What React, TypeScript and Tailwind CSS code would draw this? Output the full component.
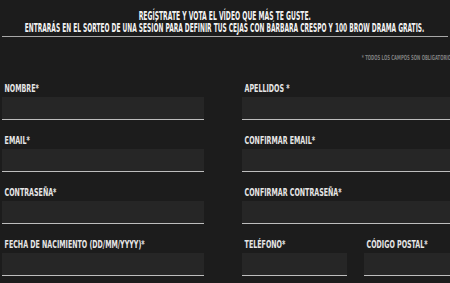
const condensed = {
  fontFamily: '"Liberation Sans Narrow", "DejaVu Sans Condensed", "Liberation Sans", sans-serif',
};

function Field({ label, className = "" }: { label: string; className?: string }) {
  return (
    <div className={`flex flex-col ${className}`}>
      <label className="mb-[2px] block origin-left scale-x-[0.64] whitespace-nowrap pl-[4px] text-[11px] font-bold leading-[12px] text-[#e6e6e6]">
        {label}
      </label>
      <div className="h-[23px] border-b border-[#bdbdbd] bg-[#262626]" />
    </div>
  );
}

export default function App() {
  return (
    <div
      className="h-[283px] w-full overflow-hidden bg-[#1c1c1c]"
      style={condensed}
    >
      <header className="flex flex-col items-center pt-[11px] text-[12px] font-bold leading-[11.5px] text-[#f2f2f2]">
        <p className="shrink-0 origin-center scale-x-[0.56] whitespace-nowrap">
          REGÍSTRATE Y VOTA EL VÍDEO QUE MÁS TE GUSTE.
        </p>
        <p className="shrink-0 origin-center scale-x-[0.545] whitespace-nowrap">
          ENTRARÁS EN EL SORTEO DE UNA SESIÓN PARA DEFINIR TUS CEJAS CON BÁRBARA CRESPO Y 100 BROW DRAMA GRATIS.
        </p>
      </header>
      <div className="mx-[2px] mt-[2px] h-px bg-[#a8a8a8]" />
      <p className="-mr-[4px] ml-auto mt-[17px] w-max origin-right scale-x-[0.61] whitespace-nowrap text-right text-[7px] font-bold leading-[8px] text-[#7c7c7c]">
        * TODOS LOS CAMPOS SON OBLIGATORIOS
      </p>
      <form className="ml-[2px] mr-[5px] mt-[21px] grid grid-cols-[202px_1fr] gap-x-[38px] gap-y-[15px]">
        <Field label="NOMBRE*" />
        <Field label="APELLIDOS *" />
        <Field label="EMAIL*" />
        <Field label="CONFIRMAR EMAIL*" />
        <Field label="CONTRASEÑA*" />
        <Field label="CONFIRMAR CONTRASEÑA*" />
        <Field label="FECHA DE NACIMIENTO (DD/MM/YYYY)*" />
        <div className="grid grid-cols-[105px_1fr] gap-x-[17px]">
          <Field label="TELÉFONO*" />
          <Field label="CÓDIGO POSTAL*" />
        </div>
      </form>
    </div>
  );
}
